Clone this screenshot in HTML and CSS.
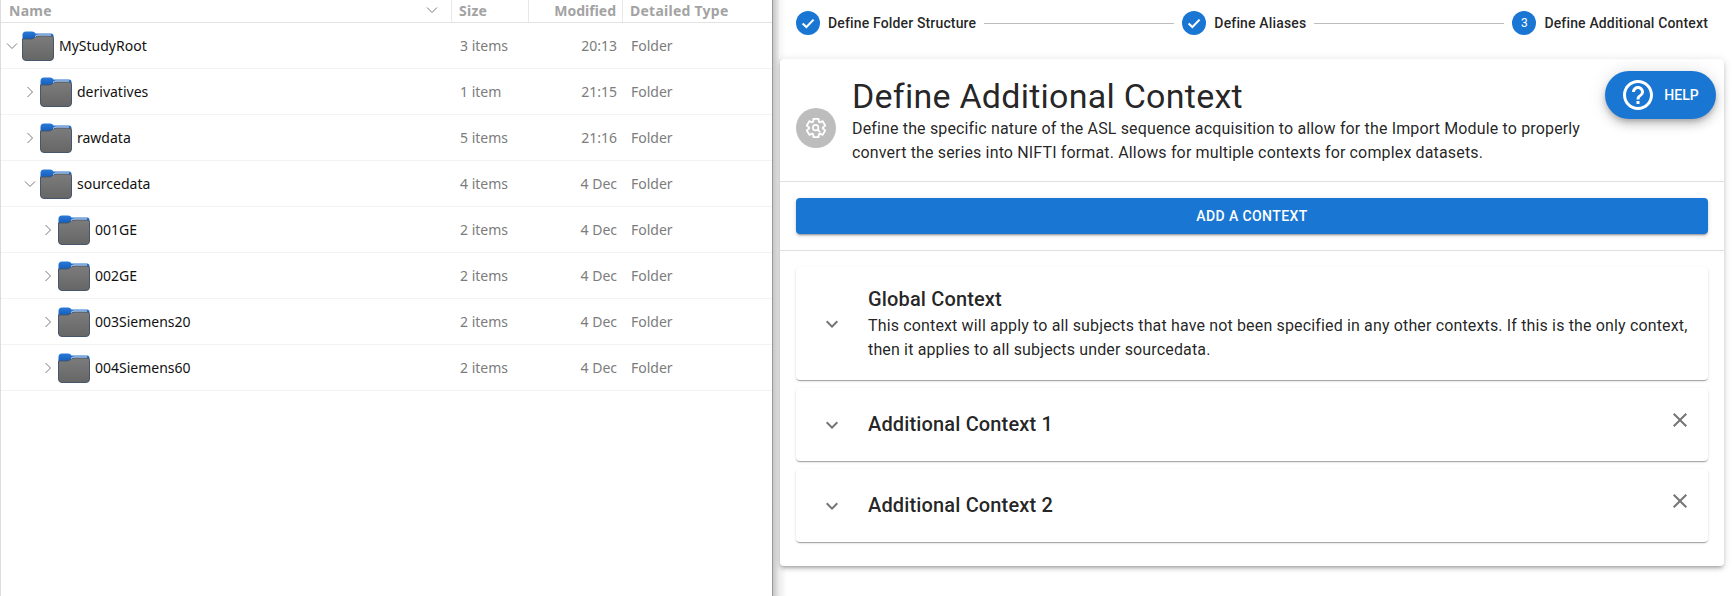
FILE: index.html
```html
<!DOCTYPE html>
<html lang="en">
<head>
    <meta charset="UTF-8">
    <meta name="viewport" content="width=device-width, initial-scale=1.0">
    <title>Define Additional Context</title>
    <link rel="stylesheet" href="styles.css">
</head>
<body>
    <svg class="defs" width="0" height="0">
        <defs>
            <linearGradient id="folderTab" x1="0" y1="0" x2="0" y2="1">
                <stop offset="0" stop-color="#2a7ad8"/>
                <stop offset="1" stop-color="#0b4fae"/>
            </linearGradient>
            <linearGradient id="folderBody" x1="0" y1="0" x2="0" y2="1">
                <stop offset="0" stop-color="#7c7c7c"/>
                <stop offset="1" stop-color="#666666"/>
            </linearGradient>
            <symbol id="folder" viewBox="0 0 32 30">
                <path d="M0.5 4 Q0.5 0.5 4 0.5 H10 Q12.5 0.5 13.5 2.5 H29 Q31.5 2.5 31.5 5 V12 H0.5 Z" fill="url(#folderTab)"/>
                <path d="M0.5 8 H9 Q11 8 12.5 6.5 Q14 5 16 5 H29 Q31.5 5 31.5 7.5 V26 Q31.5 29.5 28 29.5 H4 Q0.5 29.5 0.5 26 Z" fill="url(#folderBody)" stroke="#47566a" stroke-width="1"/>
                <path d="M13 5.5 Q14.5 4 16 4 H29" fill="none" stroke="#dfe6ef" stroke-width="1"/>
            </symbol>
            <symbol id="chevRight" viewBox="0 0 10 12"><path d="M2.5 1 L7.5 6 L2.5 11" fill="none" stroke="#7a7a7a" stroke-width="1"/></symbol>
            <symbol id="chevDown" viewBox="0 0 12 10"><path d="M1 2.5 L6 7.5 L11 2.5" fill="none" stroke="#7a7a7a" stroke-width="1"/></symbol>
            <symbol id="check" viewBox="0 0 24 24"><circle cx="12" cy="12" r="12" fill="#1976d2"/><path d="M6.6 12.4 L10.4 16 L17.6 8.6" fill="none" stroke="#fff" stroke-width="2"/></symbol>
            <symbol id="expand" viewBox="0 0 24 24"><path d="M16.59 8.59 12 13.17 7.41 8.59 6 10l6 6 6-6z" fill="#757575"/></symbol>
            <symbol id="close" viewBox="0 0 24 24"><path d="M19 6.41 17.59 5 12 10.59 6.41 5 5 6.41 10.59 12 5 17.59 6.41 19 12 13.41 17.59 19 19 17.59 13.41 12z" fill="#757575"/></symbol>
        </defs>
    </svg>

    <div class="files">
        <div class="files-head">
            <div class="head-cell">Name<svg class="sort-arrow"><use href="#chevDown"/></svg></div>
            <div class="head-cell">Size</div>
            <div class="head-cell head-right">Modified</div>
            <div class="head-cell">Detailed Type</div>
        </div>

        <div class="file-row">
            <div class="file-name level0"><svg class="chev"><use href="#chevDown"/></svg><svg class="folder"><use href="#folder"/></svg>MyStudyRoot</div>
            <div class="file-size">3 items</div><div class="file-date">20:13</div><div class="file-type">Folder</div>
        </div>
        <div class="file-row">
            <div class="file-name level1"><svg class="chev"><use href="#chevRight"/></svg><svg class="folder"><use href="#folder"/></svg>derivatives</div>
            <div class="file-size">1 item</div><div class="file-date">21:15</div><div class="file-type">Folder</div>
        </div>
        <div class="file-row">
            <div class="file-name level1"><svg class="chev"><use href="#chevRight"/></svg><svg class="folder"><use href="#folder"/></svg>rawdata</div>
            <div class="file-size">5 items</div><div class="file-date">21:16</div><div class="file-type">Folder</div>
        </div>
        <div class="file-row">
            <div class="file-name level1"><svg class="chev"><use href="#chevDown"/></svg><svg class="folder"><use href="#folder"/></svg>sourcedata</div>
            <div class="file-size">4 items</div><div class="file-date">4 Dec</div><div class="file-type">Folder</div>
        </div>
        <div class="file-row">
            <div class="file-name level2"><svg class="chev"><use href="#chevRight"/></svg><svg class="folder"><use href="#folder"/></svg>001GE</div>
            <div class="file-size">2 items</div><div class="file-date">4 Dec</div><div class="file-type">Folder</div>
        </div>
        <div class="file-row">
            <div class="file-name level2"><svg class="chev"><use href="#chevRight"/></svg><svg class="folder"><use href="#folder"/></svg>002GE</div>
            <div class="file-size">2 items</div><div class="file-date">4 Dec</div><div class="file-type">Folder</div>
        </div>
        <div class="file-row">
            <div class="file-name level2"><svg class="chev"><use href="#chevRight"/></svg><svg class="folder"><use href="#folder"/></svg>003Siemens20</div>
            <div class="file-size">2 items</div><div class="file-date">4 Dec</div><div class="file-type">Folder</div>
        </div>
        <div class="file-row">
            <div class="file-name level2"><svg class="chev"><use href="#chevRight"/></svg><svg class="folder"><use href="#folder"/></svg>004Siemens60</div>
            <div class="file-size">2 items</div><div class="file-date">4 Dec</div><div class="file-type">Folder</div>
        </div>
    </div>

    <div class="wizard">
        <div class="stepper">
            <div class="step"><svg class="step-icon"><use href="#check"/></svg>Define Folder Structure</div>
            <div class="step-line"></div>
            <div class="step"><svg class="step-icon"><use href="#check"/></svg>Define Aliases</div>
            <div class="step-line"></div>
            <div class="step"><span class="step-num">3</span>Define Additional Context</div>
        </div>

        <div class="panel">
            <div class="panel-head">
                <div class="avatar">
                    <svg viewBox="0 0 24 24" width="22" height="22"><path d="M9.25 22l-.4-3.2q-.33-.12-.61-.3t-.56-.38L4.7 19.4l-2.75-4.8 2.58-1.95q-.03-.17-.03-.33v-.65q0-.16.03-.33L1.95 9.4 4.7 4.6l2.98 1.27q.28-.2.57-.38t.6-.3l.4-3.2h5.5l.4 3.2q.33.12.62.3t.56.38L19.3 4.6l2.75 4.8-2.58 1.95q.03.17.03.33v.64q0 .16-.05.33l2.58 1.95-2.75 4.8-2.95-1.27q-.28.2-.58.38t-.6.3l-.4 3.2z" fill="none" stroke="#fff" stroke-width="2" stroke-linejoin="round"/><circle cx="11.6" cy="11.6" r="3" fill="none" stroke="#fff" stroke-width="1.8"/><path d="M13.8 13.8 L16.6 16.6" stroke="#fff" stroke-width="1.8"/></svg>
                </div>
                <div class="panel-title">
                    <h1>Define Additional Context</h1>
                    <p>Define the specific nature of the ASL sequence acquisition to allow for the Import Module to properly convert the series into NIFTI format. Allows for multiple contexts for complex datasets.</p>
                </div>
            </div>

            <div class="add-row">
                <button class="add-btn">ADD A CONTEXT</button>
            </div>

            <div class="contexts">
                <div class="context context-global">
                    <svg class="expand"><use href="#expand"/></svg>
                    <div class="context-text">
                        <h2>Global Context</h2>
                        <p>This context will apply to all subjects that have not been specified in any other contexts. If this is the only context, then it applies to all subjects under sourcedata.</p>
                    </div>
                </div>
                <div class="context">
                    <svg class="expand"><use href="#expand"/></svg>
                    <div class="context-text"><h2>Additional Context 1</h2></div>
                    <svg class="remove"><use href="#close"/></svg>
                </div>
                <div class="context">
                    <svg class="expand"><use href="#expand"/></svg>
                    <div class="context-text"><h2>Additional Context 2</h2></div>
                    <svg class="remove"><use href="#close"/></svg>
                </div>
            </div>

            <button class="help-btn">
                <svg viewBox="0 0 24 24" width="36" height="36"><path d="M11 18h2v-2h-2v2zm1-16C6.48 2 2 6.48 2 12s4.48 10 10 10 10-4.48 10-10S17.52 2 12 2zm0 18c-4.41 0-8-3.59-8-8s3.59-8 8-8 8 3.59 8 8-3.59 8-8 8zm0-14c-2.21 0-4 1.79-4 4h2c0-1.1.9-2 2-2s2 .9 2 2c0 2-3 1.75-3 5h2c0-2.25 3-2.5 3-5 0-2.21-1.79-4-4-4z" fill="#fff"/></svg>
                HELP
            </button>
        </div>
    </div>
</body>
</html>
```

FILE: styles.css
```css
* {
    box-sizing: border-box;
}

body {
    margin: 0;
    height: 596px;
    overflow: hidden;
    display: flex;
    background-color: #fff;
    font-family: Roboto, sans-serif;
    color: rgba(0, 0, 0, 0.87);
}

.defs {
    position: absolute;
}

/* file manager side */
.files {
    width: 773px;
    flex-shrink: 0;
    border-left: 1px solid #dcdcdc;
    border-right: 1px solid #9a9a9a;
    font-family: "Noto Sans", sans-serif;
    font-size: 14px;
}

.files-head,
.file-row {
    display: grid;
    grid-template-columns: 451px 77px 94px 1fr;
}

.files-head {
    height: 23px;
    border-bottom: 1px solid #e2e2e2;
    font-weight: 700;
    letter-spacing: 0.25px;
    color: #a3a3a3;
}

.head-cell {
    display: flex;
    align-items: center;
    justify-content: space-between;
    padding: 0 6px 2px 7px;
    border-right: 1px solid #e8e8e8;
}

.head-cell:first-child {
    padding-left: 8px;
}

.head-cell:last-child {
    border-right: none;
}

.head-right {
    justify-content: flex-end;
    letter-spacing: 0;
}

.sort-arrow {
    width: 12px;
    height: 10px;
    margin-right: 7px;
}

.file-row {
    height: 46px;
    align-items: center;
    border-bottom: 1px solid #f3f3f3;
    color: #7c7c7c;
}

.file-name {
    display: flex;
    align-items: center;
    color: #111;
}

.level0 { padding-left: 5px; }
.level1 { padding-left: 23px; }
.level2 { padding-left: 41px; }

.chev {
    width: 12px;
    height: 12px;
    margin-right: 4px;
}

.folder {
    width: 32px;
    height: 30px;
    margin-right: 5px;
}

.file-size { padding-left: 8px; }
.file-date { text-align: right; padding-right: 6px; }
.file-type { padding-left: 8px; }

/* wizard side */
.wizard {
    flex: 1;
    padding: 0 8px 0 7px;
    background: linear-gradient(90deg, #c6c6c6, #ececec 6px, #fff 14px);
}

.stepper {
    height: 59px;
    padding: 0 16px 13px;
    display: flex;
    align-items: center;
    background: linear-gradient(90deg, #f4f4f4, #fff 7px);
    margin-left: -1px;
    padding-left: 17px;
}

.step {
    display: flex;
    align-items: center;
    gap: 8px;
    font-size: 14px;
    font-weight: 500;
    letter-spacing: 0.15px;
}

.step-icon {
    width: 24px;
    height: 24px;
}

.step-num {
    width: 24px;
    height: 24px;
    border-radius: 50%;
    background-color: #1976d2;
    color: #fff;
    font-size: 12px;
    font-weight: 400;
    display: flex;
    align-items: center;
    justify-content: center;
}

.step-line {
    flex: 1;
    height: 1px;
    margin: 0 8px;
    background-color: #bdbdbd;
}

.panel {
    position: relative;
    height: 507px;
    background-color: #fff;
    border-radius: 4px;
    box-shadow: 0 3px 3px -2px rgba(0, 0, 0, 0.2), 0 3px 4px 0 rgba(0, 0, 0, 0.14), 0 1px 8px 0 rgba(0, 0, 0, 0.12);
}

.panel-head {
    height: 123px;
    padding: 16px;
    display: flex;
    align-items: center;
    gap: 16px;
    border-bottom: 1px solid #e0e0e0;
}

.avatar {
    width: 40px;
    height: 40px;
    flex-shrink: 0;
    margin-top: 16px;
    border-radius: 50%;
    background-color: #bdbdbd;
    display: flex;
    align-items: center;
    justify-content: center;
}

.panel-title {
    width: 730px;
}

h1 {
    margin: 0;
    font-size: 34px;
    font-weight: 400;
    line-height: 42px;
    letter-spacing: 0.25px;
}

.panel-title p,
.context-text p {
    margin: 0;
    font-size: 16px;
    line-height: 24px;
    letter-spacing: 0.15px;
}

.add-row {
    height: 69px;
    padding: 16px 16px 17px;
    border-bottom: 1px solid #e0e0e0;
}

.add-btn {
    display: block;
    width: 100%;
    height: 36px;
    border: none;
    border-radius: 4px;
    background-color: #1976d2;
    color: #fff;
    font-family: Roboto, sans-serif;
    font-size: 14px;
    font-weight: 500;
    letter-spacing: 0.4px;
    box-shadow: 0 3px 1px -2px rgba(0, 0, 0, 0.2), 0 2px 2px 0 rgba(0, 0, 0, 0.14), 0 1px 5px 0 rgba(0, 0, 0, 0.12);
}

.contexts {
    padding: 16px;
    display: flex;
    flex-direction: column;
    gap: 8px;
}

.context {
    position: relative;
    height: 73px;
    padding-left: 24px;
    display: flex;
    align-items: center;
    border-radius: 4px;
    background-color: #fff;
    box-shadow: 0 2px 1px -1px rgba(0, 0, 0, 0.2), 0 1px 1px 0 rgba(0, 0, 0, 0.14), 0 1px 3px 0 rgba(0, 0, 0, 0.12);
}

.context-global {
    height: 113px;
}

.expand {
    width: 24px;
    height: 24px;
    flex-shrink: 0;
    margin-right: 24px;
}

.context-text {
    flex: 1;
    padding-right: 16px;
    padding-bottom: 1px;
}

h2 {
    margin: 0;
    font-size: 20px;
    font-weight: 500;
    line-height: 30px;
    letter-spacing: 0.15px;
}

.remove {
    position: absolute;
    top: 20px;
    right: 16px;
    width: 24px;
    height: 24px;
}

.help-btn {
    position: absolute;
    top: 12px;
    right: 8px;
    width: 111px;
    height: 48px;
    padding: 0 2px 0 0;
    border: none;
    border-radius: 24px;
    background-color: #1976d2;
    color: #fff;
    font-family: Roboto, sans-serif;
    font-size: 14px;
    font-weight: 500;
    display: flex;
    align-items: center;
    justify-content: center;
    gap: 8px;
    box-shadow: 0 3px 5px -1px rgba(0, 0, 0, 0.2), 0 6px 10px 0 rgba(0, 0, 0, 0.14), 0 1px 18px 0 rgba(0, 0, 0, 0.12);
}
```
